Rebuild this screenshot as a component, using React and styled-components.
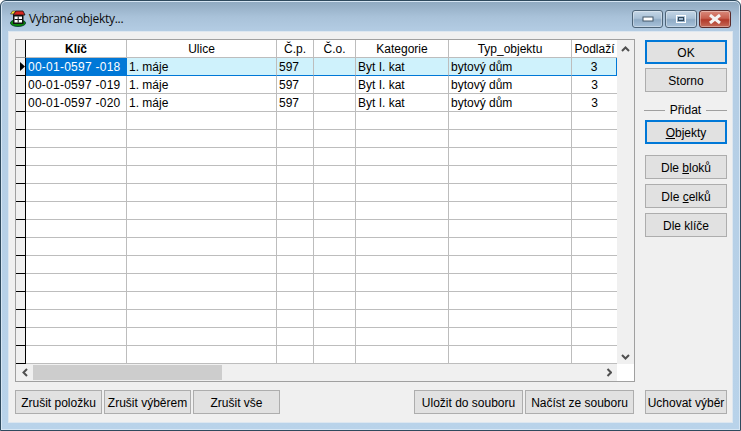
import React from 'react';
import styled, { createGlobalStyle } from 'styled-components';

const Global = createGlobalStyle`
  html, body { margin: 0; padding: 0; background: #fff; }
  #root { width: 741px; height: 431px; overflow: hidden; }
`;

const Frame = styled.div`
  box-sizing: border-box;
  width: 741px;
  height: 431px;
  display: flex;
  flex-direction: column;
  border: 1px solid #2f4a5e;
  border-radius: 6px 6px 0 0;
  background: linear-gradient(180deg, #8fa9c0 0, #a9c2d9 16px, #b4cde4 31px, #b9d3ea 100%);
  padding: 0 7px 7px;
  box-shadow: inset 0 0 0 1px #d6e6f4;
  font-family: "Liberation Sans", Arial, sans-serif;
  font-size: 12px;
  color: #000;
`;

const TitleBar = styled.div`
  height: 30px;
  flex: none;
  display: flex;
  align-items: center;
  padding: 5px 0 0 2px;
  box-sizing: border-box;
`;

const TitleText = styled.div`
  font-family: "Open Sans", "Noto Sans", sans-serif;
  font-size: 12px;
  letter-spacing: -0.3px;
  margin-left: 3px;
  color: #0b0b0b;
`;

const Controls = styled.div`
  margin-left: auto;
  margin-right: 2px;
  margin-top: 4px;
  align-self: flex-start;
  display: flex;
  gap: 2px;
`;

const Ctl = styled.div`
  box-sizing: border-box;
  width: ${p => p.$w}px;
  height: 18px;
  border: 1px solid ${p => (p.$close ? '#5a2a2a' : '#4d6478')};
  border-radius: 3px;
  display: flex;
  align-items: center;
  justify-content: center;
  background: ${p =>
    p.$close
      ? 'linear-gradient(180deg, #d98a7c 0, #c9604f 45%, #b23a2a 55%, #c56a58 100%)'
      : 'linear-gradient(180deg, #c4d6e6 0, #a9c1d7 45%, #8fabc5 55%, #a8c2da 100%)'};
  box-shadow: inset 0 0 0 1px rgba(255, 255, 255, 0.35);
`;

const Client = styled.div`
  flex: 1;
  display: flex;
  flex-direction: column;
  background: #f0f0f0;
  border: 1px solid #dde7f0;
  padding: 7px 6px 8px 6px;
  min-height: 0;
`;

const Top = styled.div`
  display: flex;
  height: 343px;
  flex: none;
`;

const GridBox = styled.div`
  box-sizing: border-box;
  width: 620px;
  height: 343px;
  border: 1px solid #a0a0a0;
  background: #fff;
  display: grid;
  grid-template-columns: 601px 17px;
  grid-template-rows: 324px 17px;
`;

const Table = styled.div`
  display: flex;
  flex-direction: column;
  overflow: hidden;
`;

const Row = styled.div`
  display: grid;
  grid-template-columns: 10px 101px 150px 37px 42px 93px 123px 45px;
  height: 18px;
  flex: none;
`;

const Cell = styled.div`
  box-sizing: border-box;
  height: 18px;
  line-height: 19px;
  border-right: 1px solid #bdbdbd;
  border-bottom: 1px solid #bdbdbd;
  padding: 0 2px;
  text-align: ${p => p.$align || 'left'};
  white-space: nowrap;
  overflow: hidden;
  background: ${p => (p.$active ? '#cff2fc' : '#fff')};
  ${p => p.$active && 'border-bottom-color: #0078d7;'}
  ${p => p.$last && 'border-right: none;'}
  ${p => p.$last && p.$active && 'border-right: 1px solid #0078d7;'}
  ${p => p.$bold && 'font-weight: bold;'}
`;

const KeyCell = styled(Cell)`
  letter-spacing: 0.25px;
  ${p => p.$selected && 'background: #0078d7; color: #fff; border-right-color: #0078d7; border-bottom-color: #0078d7;'}
`;

const HeadCell = styled(Cell)`
  border-bottom-color: #bdbdbd;
  background: #fff;
  text-align: center;
  padding: 0;
`;

const Corner = styled.div`
  box-sizing: border-box;
  height: 18px;
  background: #f0f0f0;
  border-right: 1px solid #000;
  border-bottom: 1px solid #9a9a9a;
`;

const Indicator = styled.div`
  box-sizing: border-box;
  height: 18px;
  background: #f0f0f0;
  border-right: 1px solid #000;
  border-bottom: 1px solid #000;
  display: flex;
  align-items: center;
  padding-left: 4px;
`;

const VScroll = styled.div`
  background: #f0f0f0;
  display: flex;
  flex-direction: column;
  justify-content: space-between;
  align-items: center;
  padding: 5px 0 3px;
`;

const HScroll = styled.div`
  background: #f0f0f0;
  display: flex;
  align-items: center;
  height: 17px;
`;

const Arrow = styled.div`
  width: 17px;
  flex: none;
  display: flex;
  justify-content: center;
`;

const Thumb = styled.div`
  width: 189px;
  height: 15px;
  background: #cdcdcd;
  flex: none;
`;

const Spacer = styled.div`
  flex: 1;
`;

const Side = styled.div`
  display: flex;
  flex-direction: column;
  margin-left: 10px;
  width: 82px;
  padding-top: 1px;
`;

const Button = styled.div`
  box-sizing: border-box;
  width: ${p => p.$w || 82}px;
  height: 24px;
  flex: none;
  display: flex;
  align-items: center;
  justify-content: center;
  background: #e1e1e1;
  border: ${p => (p.$focus ? '2px solid #0078d7' : '1px solid #adadad')};
  white-space: nowrap;
  margin-top: ${p => p.$mt || 0}px;
  margin-left: ${p => p.$ml || 0}px;
  padding-top: 1px;
`;

const GroupLabel = styled.div`
  display: flex;
  align-items: center;
  gap: 5px;
  height: 14px;
  margin-top: 11px;
  margin-left: -1px;
  &::before, &::after {
    content: '';
    flex: 1;
    height: 1px;
    background: #a0a0a0;
  }
`;

const Bottom = styled.div`
  display: flex;
  margin-top: 8px;
`;

const U = styled.span`
  text-decoration: underline;
`;

const columns = ['Klíč', 'Ulice', 'Č.p.', 'Č.o.', 'Kategorie', 'Typ_objektu', 'Podlaží'];
const data = [
  ['00-01-0597 -018', '1. máje', '597', '', 'Byt I. kat', 'bytový dům', '3'],
  ['00-01-0597 -019', '1. máje', '597', '', 'Byt I. kat', 'bytový dům', '3'],
  ['00-01-0597 -020', '1. máje', '597', '', 'Byt I. kat', 'bytový dům', '3'],
];
const empties = Array.from({ length: 14 }, () => ['', '', '', '', '', '', '']);

const Chevron = ({ d }) => (
  <svg width="9" height="7" viewBox="0 0 9 7">
    <path d={d} fill="none" stroke="#505050" strokeWidth="2" />
  </svg>
);

const HouseIcon = () => (
  <svg width="16" height="17" viewBox="0 0 16 17">
    <ellipse cx="8" cy="13" rx="7.6" ry="3.5" fill="#0a8a0a" stroke="#033" strokeWidth="0.8" />
    <path d="M0.5 4 L2.5 1 L6 1 L4 4 Z" fill="#f4e23a" stroke="#111" strokeWidth="0.5" />
    <path d="M3 5 L6 1 L13 1 L15 5 Z" fill="#d8261f" stroke="#111" strokeWidth="0.8" />
    <rect x="3" y="5" width="10.5" height="9" fill="#111" />
    <path d="M4.5 6.5h7.5v6H4.5z" fill="#fff" />
    <path d="M8.2 6.5v6 M4.5 9.5h7.5" stroke="#111" fill="none" />
  </svg>
);

export default function App() {
  return (
    <>
      <Global />
      <Frame>
        <TitleBar>
          <HouseIcon />
          <TitleText>Vybrané objekty...</TitleText>
          <Controls>
            <Ctl $w={31}>
              <svg width="12" height="6"><rect x="1" y="1" width="10" height="4" fill="#fff" stroke="#44586a" /></svg>
            </Ctl>
            <Ctl $w={32}>
              <svg width="12" height="10"><rect x="1.5" y="1.5" width="9" height="7" fill="none" stroke="#fff" strokeWidth="1" /><rect x="3.5" y="3.5" width="5" height="3" fill="none" stroke="#33485a" /></svg>
            </Ctl>
            <Ctl $w={32} $close>
              <svg width="14" height="10" viewBox="0 0 14 10"><path d="M2 1 L12 9 M12 1 L2 9" stroke="#f4f4f4" strokeWidth="3" /></svg>
            </Ctl>
          </Controls>
        </TitleBar>
        <Client>
          <Top>
            <GridBox>
              <Table>
                <Row>
                  <Corner />
                  {columns.map((c, i) => (
                    <HeadCell key={c} $bold={i === 0} $last={i === 6}>{c}</HeadCell>
                  ))}
                </Row>
                {[...data, ...empties].map((r, i) => (
                  <Row key={i}>
                    <Indicator>
                      {i === 0 && (
                        <svg width="5" height="9" viewBox="0 0 5 9"><path d="M0 0 L5 4.5 L0 9 Z" fill="#000" /></svg>
                      )}
                    </Indicator>
                    <KeyCell $active={i === 0} $selected={i === 0}>{r[0]}</KeyCell>
                    {r.slice(1).map((v, j) => (
                      <Cell key={j} $active={i === 0} $last={j === 5} $align={j === 5 ? 'center' : 'left'}>{v}</Cell>
                    ))}
                  </Row>
                ))}
              </Table>
              <VScroll>
                <Chevron d="M1 6 L4.5 2.5 L8 6" />
                <Chevron d="M1 1 L4.5 4.5 L8 1" />
              </VScroll>
              <HScroll>
                <Arrow><svg width="7" height="9" viewBox="0 0 7 9"><path d="M6 1 L2.5 4.5 L6 8" fill="none" stroke="#505050" strokeWidth="2" /></svg></Arrow>
                <Thumb />
                <Spacer />
                <Arrow><svg width="7" height="9" viewBox="0 0 7 9"><path d="M2.5 1 L6 4.5 L2.5 8" fill="none" stroke="#505050" strokeWidth="2" /></svg></Arrow>
              </HScroll>
              <div />
            </GridBox>
            <Side>
              <Button $focus>OK</Button>
              <Button $mt={4}>Storno</Button>
              <GroupLabel>Přidat</GroupLabel>
              <Button $focus $mt={3}><span><U>O</U>bjekty</span></Button>
              <Button $mt={11}><span>Dle <U>b</U>loků</span></Button>
              <Button $mt={5}><span>Dle <U>c</U>elků</span></Button>
              <Button $mt={5}>Dle klíče</Button>
            </Side>
          </Top>
          <Bottom>
            <Button $w={87}>Zrušit položku</Button>
            <Button $w={87} $ml={2}>Zrušit výběrem</Button>
            <Button $w={87} $ml={2}>Zrušit vše</Button>
            <Button $w={109} $ml={134}>Uložit do souboru</Button>
            <Button $w={109} $ml={2}>Načíst ze souboru</Button>
            <Button $w={82} $ml={11}>Uchovat výběr</Button>
          </Bottom>
        </Client>
      </Frame>
    </>
  );
}
